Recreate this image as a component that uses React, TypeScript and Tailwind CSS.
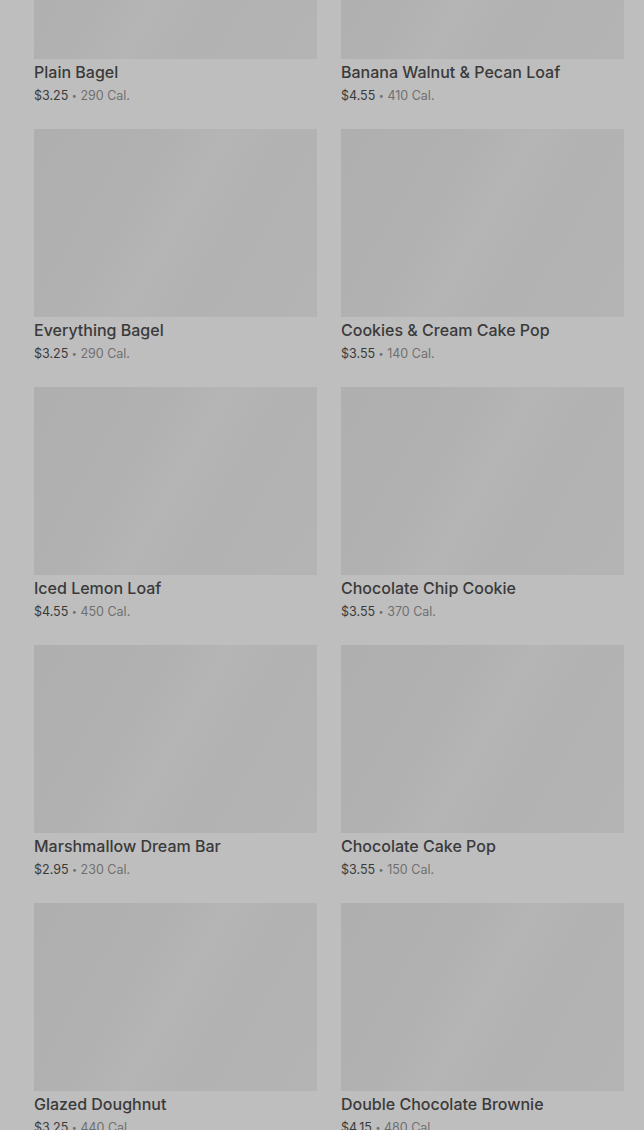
const items = [
  { name: "Plain Bagel", price: "$3.25", cal: "290 Cal." },
  { name: "Banana Walnut & Pecan Loaf", price: "$4.55", cal: "410 Cal." },
  { name: "Everything Bagel", price: "$3.25", cal: "290 Cal." },
  { name: "Cookies & Cream Cake Pop", price: "$3.55", cal: "140 Cal." },
  { name: "Iced Lemon Loaf", price: "$4.55", cal: "450 Cal." },
  { name: "Chocolate Chip Cookie", price: "$3.55", cal: "370 Cal." },
  { name: "Marshmallow Dream Bar", price: "$2.95", cal: "230 Cal." },
  { name: "Chocolate Cake Pop", price: "$3.55", cal: "150 Cal." },
  { name: "Glazed Doughnut", price: "$3.25", cal: "440 Cal." },
  { name: "Double Chocolate Brownie", price: "$4.15", cal: "480 Cal." },
];

export default function App() {
  return (
    <div className="h-[1130px] overflow-hidden bg-[#bebebe] font-['Inter','Noto_Sans',sans-serif]">
      <div className="-mt-[129px] pl-[34px] pr-[20px] grid grid-cols-2 gap-x-6 gap-y-[21px]">
        {items.map((item) => (
          <div key={item.name}>
            <div className="h-[188px] bg-[linear-gradient(120deg,#afafaf_0%,#b1b1b1_35%,#b5b5b5_50%,#b2b2b2_65%,#b4b4b4_100%)]" />
            <div className="mt-[1px] text-[16px] leading-6 font-medium text-[#3a3a3a]">{item.name}</div>
            <div className="text-[12.5px] leading-6">
              <span className="text-[#3a3a3a]">{item.price}</span>
              <span className="text-[#707070]"> <span className="text-[9px] align-[1px]">•</span> {item.cal}</span>
            </div>
          </div>
        ))}
      </div>
    </div>
  );
}
